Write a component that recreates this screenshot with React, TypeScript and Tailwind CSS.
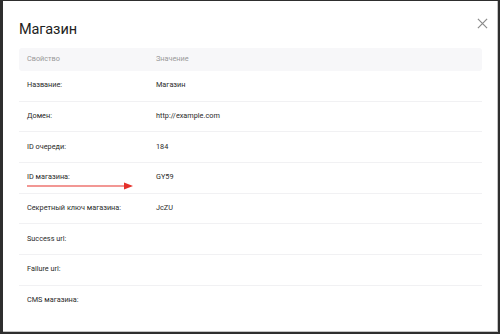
import React from "react";

const rows: { label: string; value: string }[] = [
  { label: "Название:", value: "Магазин" },
  { label: "Домен:", value: "http://example.com" },
  { label: "ID очереди:", value: "184" },
  { label: "ID магазина:", value: "GY59" },
  { label: "Секретный ключ магазина:", value: "JcZU" },
  { label: "Success url:", value: "" },
  { label: "Failure url:", value: "" },
  { label: "CMS магазина:", value: "" },
];

const App: React.FC = () => {
  return (
    <div className="w-[500px] h-[334px] bg-[#2e2e2e] pt-px pl-[3px] pr-[2px] pb-[2px] font-['Roboto',sans-serif]">
      <div className="relative h-full bg-white border-r border-b border-[#c4c4c4]">
        {/* Header */}
        <div className="flex items-center justify-between pl-4 pr-[9px] h-[47px]">
          <h1 className="text-[14.5px] leading-none text-[#222] pt-[11px] tracking-[-0.1px]">Магазин</h1>
          <button className="w-[11px] h-[11px] text-[#8a8a8a] mt-[-2px]">
            <svg viewBox="0 0 12 12" className="w-full h-full" fill="none" stroke="currentColor" strokeWidth="1.3">
              <path d="M1 1L11 11M11 1L1 11" />
            </svg>
          </button>
        </div>

        {/* Table */}
        <div className="mx-4 mr-[15px] text-[7.3px] text-[#2a2a2a]">
          <div className="flex items-center h-[23px] bg-[#f7f7f9] rounded-[3px] text-[#9a9a9a]">
            <div className="w-[137px] pl-2">Свойство</div>
            <div>Значение</div>
          </div>
          {rows.map((r, i) => (
            <div
              key={r.label}
              className={`relative flex items-center h-[30.67px] ${i < rows.length - 1 ? "border-b border-[#f1f1f3]" : ""}`}
            >
              <div className="w-[137px] pl-2">{r.label}</div>
              <div>{r.value}</div>
              {r.label === "ID магазина:" && (
                <svg className="absolute left-2 top-[19px]" width="106" height="8" viewBox="0 0 106 8">
                  <path d="M0 4H99" stroke="#e5302a" strokeWidth="1.2" />
                  <path d="M97 0.5L106 4L97 7.5Z" fill="#e5302a" />
                </svg>
              )}
            </div>
          ))}
        </div>
      </div>
    </div>
  );
};

export default App;
